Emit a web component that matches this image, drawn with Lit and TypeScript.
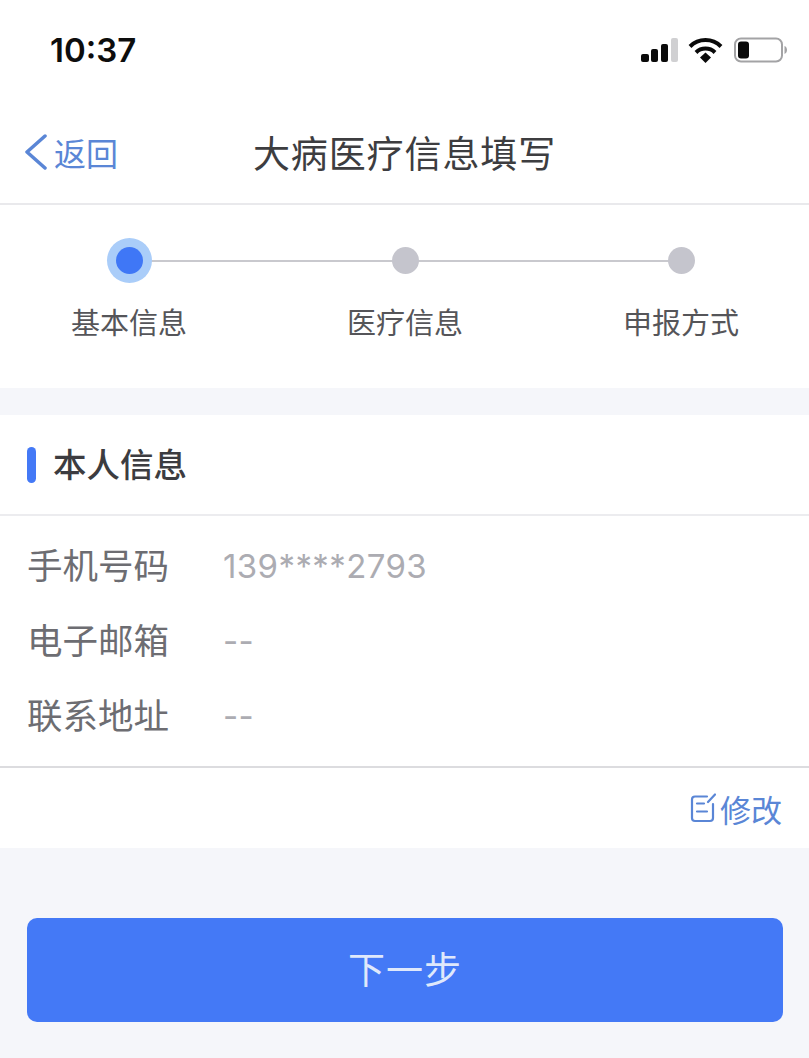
import { LitElement, html, css } from 'lit'
import { customElement } from 'lit/decorators.js'

@customElement('app-root')
export class AppRoot extends LitElement {
  static styles = css`
    :host {
      display: block;
      width: 809px;
      height: 1058px;
      overflow: hidden;
      background: #f5f6fa;
      font-family: "Noto Sans CJK SC", "Liberation Sans", sans-serif;
    }

    .top {
      background: #fff;
    }

    .status {
      height: 100px;
      display: flex;
      align-items: flex-start;
      justify-content: space-between;
      box-sizing: border-box;
      padding: 32px 22px 0 50px;
    }

    .time {
      font-family: Inter, "Liberation Sans", sans-serif;
      font-size: 33px;
      line-height: 36px;
      font-weight: 600;
      color: #0d0d0d;
    }

    .status-icons {
      display: flex;
      align-items: center;
      gap: 10px;
      padding-top: 5px;
    }

    .nav {
      height: 105px;
      box-sizing: border-box;
      border-bottom: 2px solid #e9e9ec;
      display: grid;
      grid-template-columns: 1fr auto 1fr;
      align-items: center;
    }

    .back {
      display: flex;
      align-items: center;
      gap: 6px;
      padding-left: 23px;
      color: #5a86d6;
      font-size: 32px;
      line-height: 40px;
    }

    .title {
      font-size: 37px;
      line-height: 44px;
      color: #3d3d40;
      letter-spacing: 0.9px;
    }

    .steps {
      height: 183px;
      box-sizing: border-box;
      padding: 32px 0 0 1px;
      display: grid;
      grid-template-columns: repeat(3, 276px);
      justify-content: center;
    }

    .step {
      position: relative;
      display: flex;
      flex-direction: column;
      align-items: center;
      font-size: 29px;
      line-height: 36px;
      color: #555559;
    }

    .dot-wrap {
      height: 46px;
      display: flex;
      align-items: center;
      justify-content: center;
      margin-bottom: 20px;
    }

    .dot {
      width: 27px;
      height: 27px;
      border-radius: 50%;
      background: #c5c5cd;
      position: relative;
      z-index: 1;
    }

    .dot.active {
      background: #3f77f6;
      box-shadow: 0 0 0 9px #aacdf9;
    }

    /* connector runs from this step's dot to the next one */
    .step:not(:last-child)::after {
      content: '';
      position: absolute;
      top: 23px;
      left: 50%;
      width: 100%;
      height: 2px;
      background: #c9c9ce;
    }

    .card {
      background: #fff;
      margin-top: 27px;
    }

    .card-head {
      height: 101px;
      box-sizing: border-box;
      border-bottom: 2px solid #ececef;
      display: flex;
      align-items: center;
      gap: 17px;
      padding: 0 0 0 27px;
      font-size: 33.5px;
      font-weight: 500;
      color: #3c3c40;
    }

    .card-head .name {
      padding-bottom: 4px;
    }

    .bar {
      width: 9px;
      height: 36px;
      border-radius: 5px;
      background: #4479f6;
    }

    .rows {
      height: 252px;
      box-sizing: border-box;
      padding-top: 12px;
      border-bottom: 2px solid #dcdcdf;
    }

    .row {
      height: 75px;
      display: flex;
      align-items: center;
      padding-left: 27px;
    }

    .label {
      width: 196px;
      font-size: 35.5px;
      color: #6d6d72;
      padding-bottom: 4px;
    }

    .value {
      font-family: Inter, "Liberation Sans", sans-serif;
      font-size: 33px;
      color: #acacb2;
      letter-spacing: 0.4px;
    }

    .card-foot {
      height: 80px;
      display: flex;
      align-items: center;
      justify-content: flex-end;
      gap: 4px;
      padding-right: 27px;
      color: #5a86d6;
      font-size: 31px;
    }

    .next {
      display: block;
      box-sizing: border-box;
      width: 756px;
      height: 104px;
      margin: 70px 0 0 27px;
      padding: 0 0 5px;
      border: none;
      border-radius: 10px;
      background: #4479f6;
      color: #dfe8fb;
      font-family: inherit;
      font-size: 37px;
      letter-spacing: 1px;
    }
  `

  render() {
    const steps = ['基本信息', '医疗信息', '申报方式']
    const rows = [
      ['手机号码', '139****2793'],
      ['电子邮箱', '--'],
      ['联系地址', '--'],
    ]
    return html`
      <div class="top">
        <div class="status">
          <span class="time">10:37</span>
          <div class="status-icons">
            <svg width="37" height="24" viewBox="0 0 37 24">
              <rect x="0" y="16" width="8" height="8" rx="2" fill="#0a0a0a" />
              <rect x="10" y="11" width="7" height="13" rx="2" fill="#0a0a0a" />
              <rect x="20" y="6" width="7" height="18" rx="2" fill="#0a0a0a" />
              <rect x="30" y="0" width="7" height="24" rx="2" fill="#d0d0d2" />
            </svg>
            <svg width="35" height="26" viewBox="0 0 35 26">
              <path d="M2 9.500a22 22 0 0 1 31 0" fill="none" stroke="#0a0a0a" stroke-width="4" />
              <path d="M8 15.500a13.500 13.500 0 0 1 19 0" fill="none" stroke="#0a0a0a" stroke-width="4" />
              <path d="M12 20.500 17.500 15.500 23 20.500 17.500 26Z" fill="#0a0a0a" />
            </svg>
            <svg width="53" height="26" viewBox="0 0 53 26" style="margin-left:1px">
              <rect x="1" y="1.500" width="47" height="23" rx="6" fill="none" stroke="#a3a3a5" stroke-width="2" />
              <rect x="4" y="4.500" width="11" height="17" rx="3" fill="#0a0a0a" />
              <path d="M50.500 9c1.600.6 2.500 2.200 2.500 4s-.9 3.400-2.500 4Z" fill="#a3a3a5" />
            </svg>
          </div>
        </div>

        <div class="nav">
          <div class="back">
            <svg width="25" height="36" viewBox="0 0 25 36">
              <path d="M22 2 4 18l18 16" fill="none" stroke="#5a86d6" stroke-width="3.500" stroke-linecap="round" stroke-linejoin="round" />
            </svg>
            <span>返回</span>
          </div>
          <div class="title">大病医疗信息填写</div>
          <div></div>
        </div>

        <div class="steps">
          ${steps.map((s, i) => html`
            <div class="step">
              <div class="dot-wrap"><div class="dot ${i === 0 ? 'active' : ''}"></div></div>
              <span>${s}</span>
            </div>
          `)}
        </div>
      </div>

      <div class="card">
        <div class="card-head"><span class="bar"></span><span class="name">本人信息</span></div>
        <div class="rows">
          ${rows.map(([k, v]) => html`
            <div class="row"><span class="label">${k}</span><span class="value">${v}</span></div>
          `)}
        </div>
        <div class="card-foot">
          <svg width="26" height="30" viewBox="0 0 26 30">
            <path d="M17 3.500H5a3 3 0 0 0-3 3V25a3 3 0 0 0 3 3h15a3 3 0 0 0 3-3V11" fill="none" stroke="#5a86d6" stroke-width="2.200" stroke-linecap="round" />
            <path d="M7 10.500h7M7 18.500h10M18 9 25 1.500" fill="none" stroke="#5a86d6" stroke-width="2.200" stroke-linecap="round" />
          </svg>
          <span>修改</span>
        </div>
      </div>

      <button class="next">下一步</button>
    `
  }
}
